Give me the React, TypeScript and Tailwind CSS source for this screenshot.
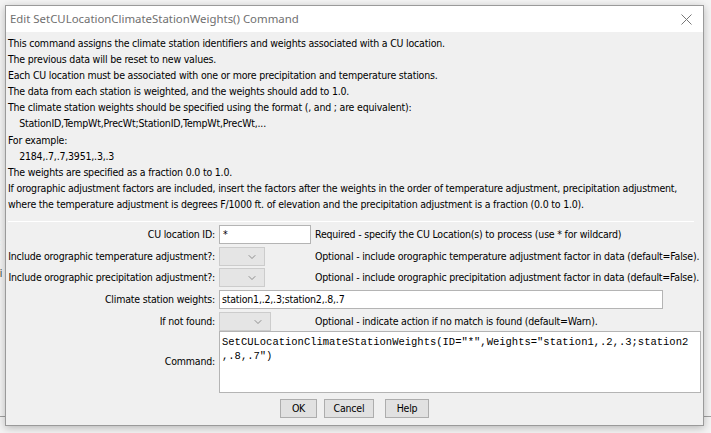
import { ChevronDown } from "lucide-react";

const intro = [
  "This command assigns the climate station identifiers and weights associated with a CU location.",
  "The previous data will be reset to new values.",
  "Each CU location must be associated with one or more precipitation and temperature stations.",
  "The data from each station is weighted, and the weights should add to 1.0.",
  "The climate station weights should be specified using the format (, and ; are equivalent):",
  "    StationID,TempWt,PrecWt;StationID,TempWt,PrecWt,...",
  "For example:",
  "    2184,.7,.7,3951,.3,.3",
  "The weights are specified as a fraction 0.0 to 1.0.",
  "If orographic adjustment factors are included, insert the factors after the weights in the order of temperature adjustment, precipitation adjustment,",
  "where the temperature adjustment is degrees F/1000 ft. of elevation and the precipitation adjustment is a fraction (0.0 to 1.0).",
];

const ui = "font-['DejaVu_Sans_Condensed','Liberation_Sans',sans-serif] text-[10.5px] tracking-[-0.2px]";

function Combo({ width }: { width: string }) {
  return (
    <div className={`${width} h-[19px] bg-[#e5e5e5] border border-[#cccccc] flex items-center justify-end pr-[6px]`}>
      <ChevronDown size={12} strokeWidth={1.5} className="text-[#707070]" />
    </div>
  );
}

function Label({ children }: { children: React.ReactNode }) {
  return <div className="text-right whitespace-nowrap text-black">{children}</div>;
}

function Btn({ children, w }: { children: React.ReactNode; w: string }) {
  return (
    <button className={`${w} h-[19px] bg-[#e1e1e1] border border-[#adadad] text-black flex items-center justify-center`}>
      {children}
    </button>
  );
}

export default function App() {
  return (
    <div className="relative w-[711px] h-[433px] bg-[#f4f4f4] overflow-hidden">
      {/* bits of the window behind */}
      <div className={`absolute left-[-6px] top-[233px] ${ui} text-[#333] leading-[16px]`}>
        <div>t:</div>
        <div>n</div>
        <div>Si</div>
      </div>
      <div className="absolute left-0 top-[416px] w-[711px] h-px bg-[#a0a0a0]" />

      <div className={`relative ml-[5px] mt-[5px] w-[699px] h-[421px] border border-[#9a9a9a] bg-[#f0f0f0] shadow-[0_2px_8px_rgba(0,0,0,0.25)] ${ui}`}>
        <div className="h-[26px] bg-white flex items-center justify-between pl-[4px] pr-[10px]">
          <span className="font-['Noto_Sans',sans-serif] text-[11.4px] tracking-normal text-[#6f6f6f]">
            Edit SetCULocationClimateStationWeights() Command
          </span>
          <svg width="11" height="11" viewBox="0 0 11 11" className="mr-[1px]">
            <path d="M0.5 0.5L10.5 10.5M10.5 0.5L0.5 10.5" stroke="#777" strokeWidth="1" />
          </svg>
        </div>

        <div className="pl-[2px] pt-[3px] text-black">
          {intro.map((l, i) => (
            <div key={i} className="h-[16.1px] leading-[16px] whitespace-pre">
              {l}
            </div>
          ))}
        </div>

        <div className="ml-[2px] mr-[9px] mt-[9px] h-px bg-[#d5d5d5] border-b border-white" />

        <div className="grid grid-cols-[209px_92px_1fr] gap-x-[4px] items-center mt-[3px] text-black">
          <Label>CU location ID:</Label>
          <div className="h-[19px] bg-white border border-[#b4b4b4] px-[3px] leading-[17px]">*</div>
          <div className="whitespace-nowrap overflow-hidden">Required - specify the CU Location(s) to process (use * for wildcard)</div>

          <div className="col-span-3 h-[3px]" />
          <Label>Include orographic temperature adjustment?:</Label>
          <Combo width="w-[46px]" />
          <div className="whitespace-nowrap overflow-hidden">Optional - include orographic temperature adjustment factor in data (default=False).</div>

          <div className="col-span-3 h-[2px]" />
          <Label>Include orographic precipitation adjustment?:</Label>
          <Combo width="w-[46px]" />
          <div className="whitespace-nowrap overflow-hidden">Optional - include orographic precipitation adjustment factor in data (default=False).</div>

          <div className="col-span-3 h-[3px]" />
          <Label>Climate station weights:</Label>
          <div className="col-span-2 w-[444px] h-[19px] bg-white border border-[#b4b4b4] px-[2px] leading-[17px]">
            station1,.2,.3;station2,.8,.7
          </div>

          <div className="col-span-3 h-[3px]" />
          <Label>If not found:</Label>
          <Combo width="w-[52px]" />
          <div className="whitespace-nowrap overflow-hidden">Optional - indicate action if no match is found (default=Warn).</div>

          <Label>Command:</Label>
          <div className="col-span-2 mr-[2px] h-[62px] bg-white border border-[#b4b4b4] px-[2px] pt-[3px] font-['Liberation_Mono',monospace] text-[10.5px] tracking-normal leading-[14px] whitespace-pre overflow-hidden">
            {'SetCULocationClimateStationWeights(ID="*",Weights="station1,.2,.3;station2\n,.8,.7")'}
          </div>
        </div>

        <div className="flex justify-center mt-[6px]">
          <Btn w="w-[37px]">OK</Btn>
          <div className="w-[7px]" />
          <Btn w="w-[50px]">Cancel</Btn>
          <div className="w-[11px]" />
          <Btn w="w-[44px]">Help</Btn>
        </div>
      </div>
    </div>
  );
}
